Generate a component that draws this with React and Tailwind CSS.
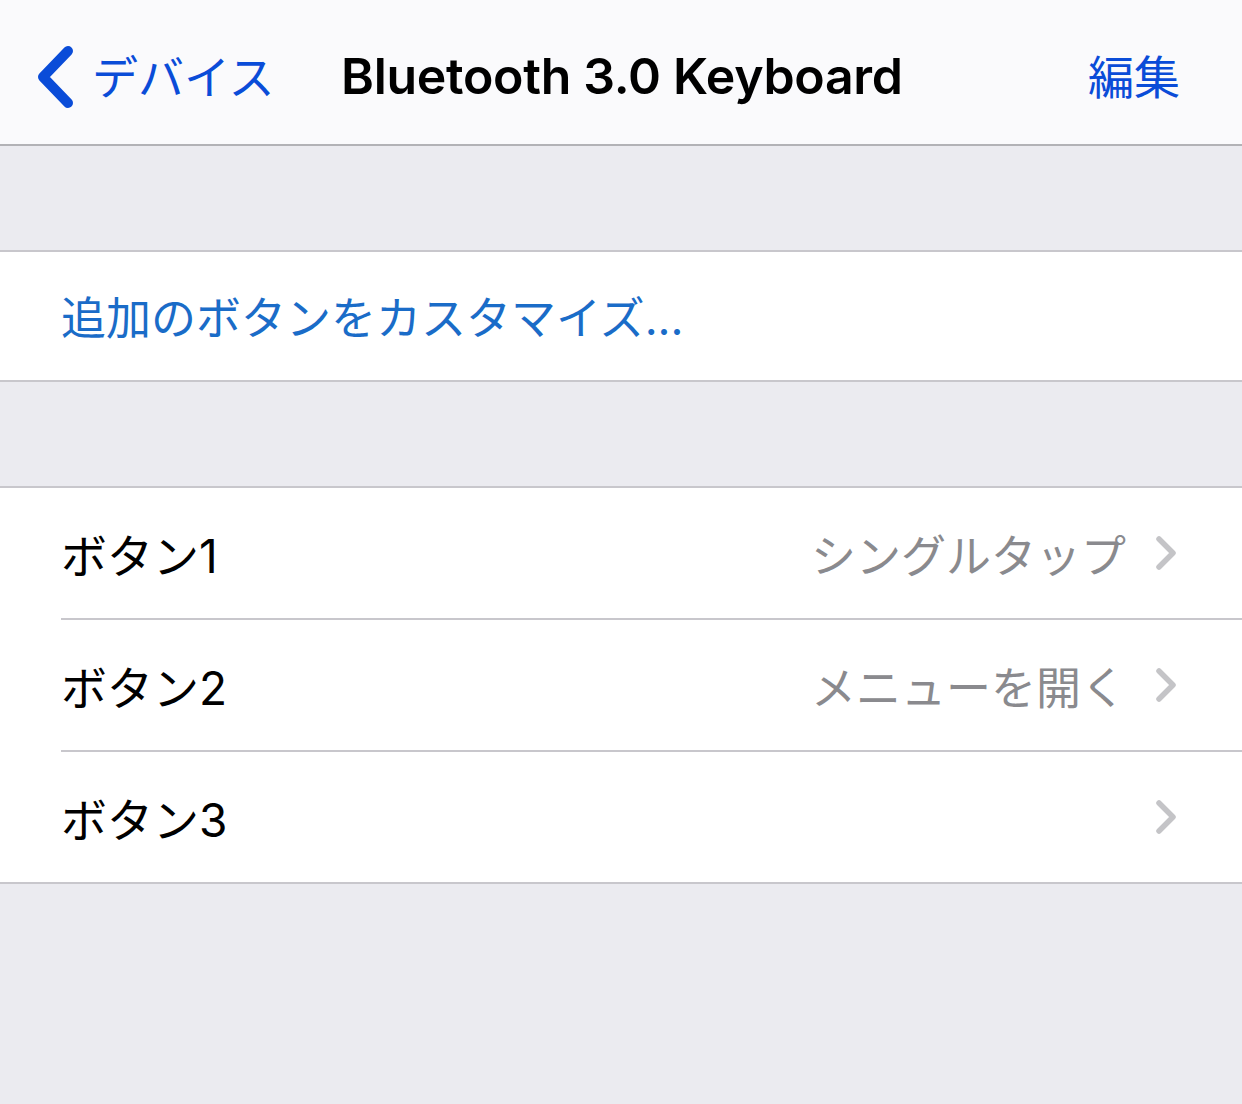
import React from "react";

const rows = [
  { label: "ボタン1", value: "シングルタップ" },
  { label: "ボタン2", value: "メニューを開く" },
  { label: "ボタン3", value: "" },
];

const font = { fontFamily: 'Inter, "Noto Sans CJK JP", sans-serif' };

const Chevron = ({ className }) => (
  <svg viewBox="0 0 24 36" className={className} fill="none">
    <path d="M5 4 L19 18 L5 32" stroke="currentColor" strokeWidth="5.5" strokeLinecap="round" strokeLinejoin="round" />
  </svg>
);

const App = () => {
  return (
    <div className="w-[1242px] h-[1104px] bg-[#ebebf0] flex flex-col" style={font}>
      {/* Nav bar */}
      <div className="h-[146px] bg-[#fafafc] border-b-2 border-[#b2b2b6] flex items-center pt-[10px] relative">
        <div className="flex items-center pl-[35px] text-[#0a4cd8]">
          <svg viewBox="0 0 40 64" className="w-[40px] h-[64px]" fill="none">
            <path d="M33 6 L8 32 L33 58" stroke="currentColor" strokeWidth="10" strokeLinecap="round" strokeLinejoin="round" />
          </svg>
          <span className="ml-[17px] text-[46px] leading-none">デバイス</span>
        </div>
        <div className="absolute left-[341px] top-0 h-full flex items-center pt-[8px]">
          <span className="text-[50px] font-semibold leading-none tracking-[-0.3px] text-black">Bluetooth 3.0 Keyboard</span>
        </div>
        <span className="ml-auto mr-[62px] text-[46px] leading-none text-[#0a4cd8]">編集</span>
      </div>

      <div className="h-[104px]" />

      {/* Customize link */}
      <div className="bg-white border-y-2 border-[#c8c7cc] h-[132px] flex items-center pl-[61px] pt-[4px]">
        <span className="text-[45px] leading-none text-[#1a6cc8]">追加のボタンをカスタマイズ...</span>
      </div>

      <div className="h-[104px]" />

      {/* Buttons list */}
      <div className="bg-white border-y-2 border-[#c8c7cc]">
        {rows.map((row, i) => (
          <div key={i} className="pl-[61px]">
            <div
              className={
                "flex items-center pr-[64px] pt-[6px]" +
                (i < rows.length - 1 ? " h-[132px] border-b-2 border-[#c8c7cc]" : " h-[130px]")
              }
            >
              <span className="text-[46px] leading-none text-black">{row.label}</span>
              <span className="ml-auto text-[45px] leading-none text-[#8a8a8e]">{row.value}</span>
              <Chevron className="ml-[28px] -mt-[6px] w-[24px] h-[36px] text-[#c4c4c7]" />
            </div>
          </div>
        ))}
      </div>
    </div>
  );
};

export default App;
